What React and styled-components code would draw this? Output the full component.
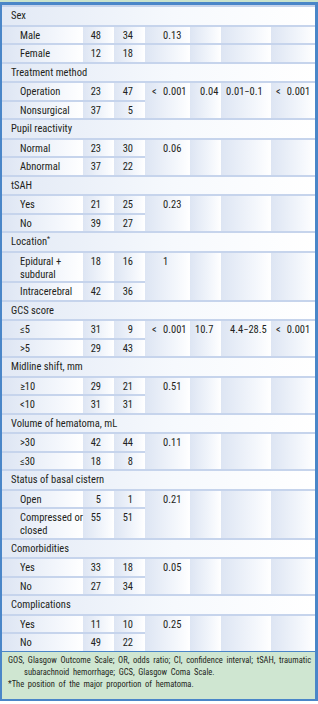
import styled, { createGlobalStyle } from "styled-components";

const GlobalStyle = createGlobalStyle`
  body {
    margin: 0;
    background: #ffffff;
  }
`;

const narrow = `"Roboto Condensed", "Liberation Sans Narrow", "Arial Narrow", "Liberation Sans", Arial, sans-serif`;

const Page = styled.div`
  width: 318px;
  font-family: ${narrow};
  color: #231f20;
`;

const TopStrip = styled.div`
  height: 2px;
  background: #c9e3cd;
`;

const Frame = styled.div`
  border-top: 3px solid #4a86c8;
  border-left: 2px solid #4a86c8;
  border-right: 3px solid #4a86c8;
  border-bottom: 2px solid #4a86c8;
`;

const Table = styled.table`
  width: 313px;
  table-layout: fixed;
  border-collapse: collapse;
  border-spacing: 0;
  font-size: 10.5px;
`;

const Row = styled.tr``;

const Cell = styled.td`
  height: ${(p) => (p.$tall ? 26.5 : 14.5)}px;
  padding: 2px ${(p) => p.$pr ?? 0}px 0 ${(p) => p.$pl ?? 0}px;
  vertical-align: top;
  line-height: 13px;
  text-align: ${(p) => p.$align || "left"};
  white-space: nowrap;
  border-top: 2px solid #c6d4ec;
  background: linear-gradient(to right, #dde5f3 0%, #f4f7fc 70%, #ffffff 100%);
`;

const HeadCell = styled.td`
  height: 15.5px;
  padding: 2px 0 0 9px;
  vertical-align: top;
  line-height: 13px;
  border-top: 2px solid #c6d4ec;
  background: linear-gradient(to right, #e2e9f5 0%, #f6f9fd 55%, #ffffff 100%);
  sup {
    font-size: 7px;
    line-height: 0;
    vertical-align: 4px;
  }
`;

const Lt = styled.span`
  display: inline-block;
  width: ${(p) => p.$w ?? 11}px;
`;

const Footer = styled.div`
  border-top: 1px solid #4a86c8;
  background: #cfe6d1;
  padding: 2px 2px 9px 6px;
  font-size: 8.5px;
  line-height: 12px;
  word-spacing: 1.7px;
  color: #231f20;
`;

const FootLine = styled.div`
  white-space: nowrap;
  padding-left: ${(p) => (p.$indent ? 16 : 0)}px;
`;

const groups = [
  {
    title: "Sex",
    split: true,
    rows: [
      ["Male", 48, 34, "0.13"],
      ["Female", 12, 18, ""],
    ],
  },
  {
    title: "Treatment method",
    rows: [
      ["Operation", 23, 47],
      ["Nonsurgical", 37, 5],
    ],
    p: { lt: true, v: "0.001" },
    or: { v: "0.04", pl: 10 },
    ci: { v: "0.01−0.1", pl: 5 },
    p2: { lt: true, v: "0.001" },
  },
  {
    title: "Pupil reactivity",
    rows: [
      ["Normal", 23, 30],
      ["Abnormal", 37, 22],
    ],
    p: { v: "0.06" },
  },
  {
    title: "tSAH",
    rows: [
      ["Yes", 21, 25],
      ["No", 39, 27],
    ],
    p: { v: "0.23" },
  },
  {
    title: "Location",
    star: true,
    rows: [
      [["Epidural +", "subdural"], 18, 16],
      ["Intracerebral", 42, 36],
    ],
    p: { v: "1" },
  },
  {
    title: "GCS score",
    rows: [
      ["≤5", 31, 9],
      [">5", 29, 43],
    ],
    p: { lt: true, v: "0.001" },
    or: { v: "10.7", pl: 5 },
    ci: { v: "4.4−28.5", pl: 9 },
    p2: { lt: true, v: "0.001" },
  },
  {
    title: "Midline shift, mm",
    rows: [
      ["≥10", 29, 21],
      ["<10", 31, 31],
    ],
    p: { v: "0.51" },
  },
  {
    title: "Volume of hematoma, mL",
    rows: [
      [">30", 42, 44],
      ["≤30", 18, 8],
    ],
    p: { v: "0.11" },
  },
  {
    title: "Status of basal cistern",
    rows: [
      ["Open", 5, 1],
      [["Compressed or", "closed"], 55, 51],
    ],
    p: { v: "0.21" },
  },
  {
    title: "Comorbidities",
    rows: [
      ["Yes", 33, 18],
      ["No", 27, 34],
    ],
    p: { v: "0.05" },
  },
  {
    title: "Complications",
    rows: [
      ["Yes", 11, 10],
      ["No", 49, 22],
    ],
    p: { v: "0.25" },
  },
];

const PValue = ({ p }) =>
  p && p.v ? (
    <>
      <Lt>{p.lt ? "<" : ""}</Lt>
      {p.v}
    </>
  ) : null;

const Label = ({ text }) =>
  Array.isArray(text) ? (
    <>
      {text[0]}
      <br />
      {text[1]}
    </>
  ) : (
    text
  );

const Group = ({ g }) => (
  <>
    <Row>
      <HeadCell colSpan={7}>
        {g.title}
        {g.star && <sup>*</sup>}
      </HeadCell>
    </Row>
    {g.rows.map((r, i) => {
      const tall = Array.isArray(r[0]);
      return (
        <Row key={i}>
          <Cell $pl={18} $tall={tall}>
            <Label text={r[0]} />
          </Cell>
          <Cell $align="right" $pr={13} $tall={tall}>
            {r[1]}
          </Cell>
          <Cell $align="right" $pr={12} $tall={tall}>
            {r[2]}
          </Cell>
          {g.split ? (
            <>
              <Cell $pl={7}>
                <PValue p={{ v: r[3] }} />
              </Cell>
              <Cell />
              <Cell />
              <Cell />
            </>
          ) : (
            i === 0 && (
              <>
                <Cell rowSpan={2} $pl={7}>
                  <PValue p={g.p} />
                </Cell>
                <Cell rowSpan={2} $pl={g.or ? g.or.pl : 0}>
                  {g.or && g.or.v}
                </Cell>
                <Cell rowSpan={2} $pl={g.ci ? g.ci.pl : 0}>
                  {g.ci && g.ci.v}
                </Cell>
                <Cell rowSpan={2} $pl={5}>
                  {g.p2 && (
                    <>
                      {"<"}
                      <Lt $w={6} />
                      {g.p2.v}
                    </>
                  )}
                </Cell>
              </>
            )
          )}
        </Row>
      );
    })}
  </>
);

export default function App() {
  return (
    <Page>
      <GlobalStyle />
      <TopStrip />
      <Frame>
        <Table>
          <colgroup>
            <col style={{ width: 81 }} />
            <col style={{ width: 31 }} />
            <col style={{ width: 31 }} />
            <col style={{ width: 45 }} />
            <col style={{ width: 31 }} />
            <col style={{ width: 50 }} />
            <col style={{ width: 44 }} />
          </colgroup>
          <tbody>
            {groups.map((g) => (
              <Group key={g.title} g={g} />
            ))}
          </tbody>
        </Table>
        <Footer>
          <FootLine>
            GOS, Glasgow Outcome Scale; OR, odds ratio; CI, confidence interval; tSAH, traumatic
          </FootLine>
          <FootLine $indent>subarachnoid hemorrhage; GCS, Glasgow Coma Scale.</FootLine>
          <FootLine>*The position of the major proportion of hematoma.</FootLine>
        </Footer>
      </Frame>
    </Page>
  );
}
